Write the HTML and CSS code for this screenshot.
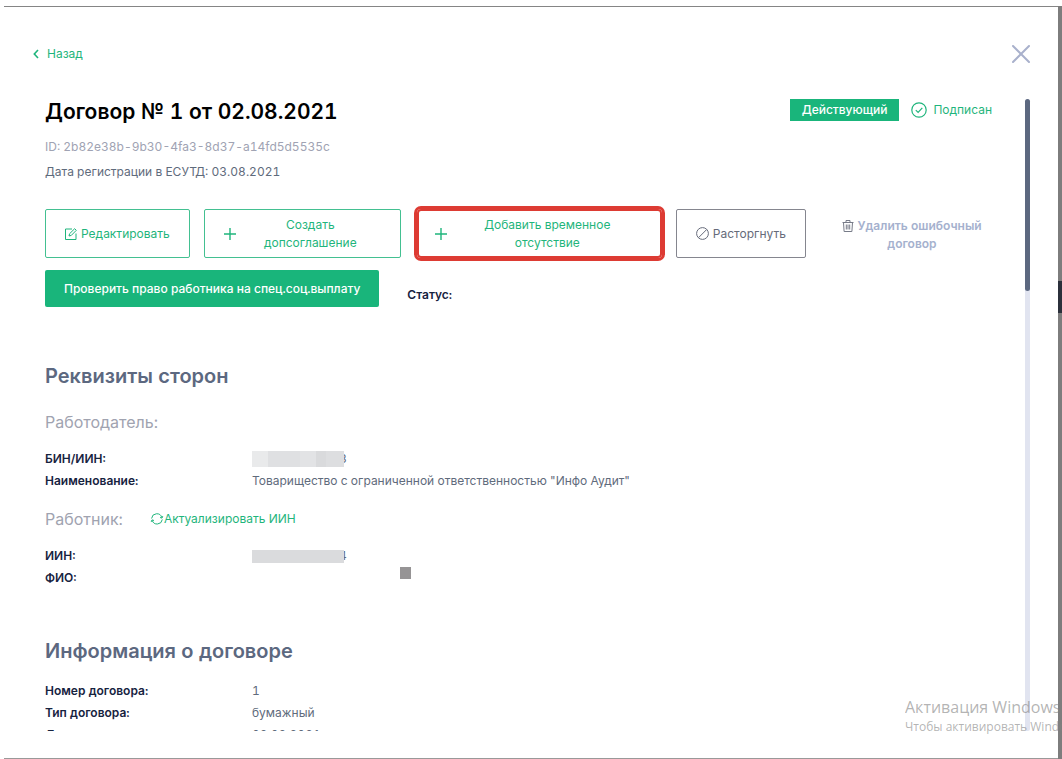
FILE: index.html
```html
<!DOCTYPE html>
<html lang="ru">
<head>
<meta charset="UTF-8">
<meta name="viewport" content="width=device-width, initial-scale=1">
<title>Договор № 1 от 02.08.2021</title>
<link rel="stylesheet" href="styles.css">
</head>
<body>
<div class="page">
  <main class="modal">
    <header class="modal-header">
      <a class="back" href="#">
        <svg width="6" height="10" viewBox="0 0 6 10"><path d="M5 1 1.300 5 5 9" fill="none" stroke="currentColor" stroke-width="1.600"/></svg>
        Назад
      </a>
      <button class="close" type="button" aria-label="Закрыть">
        <svg width="18" height="18" viewBox="0 0 18 18"><path d="M1 1l16 16M17 1L1 17" fill="none" stroke="currentColor" stroke-width="2" stroke-linecap="round"/></svg>
      </button>
    </header>

    <div class="scroll-area">
      <div class="content">
        <div class="title-row">
          <h1>Договор № 1 от 02.08.2021</h1>
          <div class="status">
            <span class="badge">Действующий</span>
            <span class="signed">
              <svg width="16" height="16" viewBox="0 0 16 16" fill="none" stroke="currentColor" stroke-width="1.200"><circle cx="8" cy="8" r="7.200"/><path d="M4.800 8.200l2.300 2.300 4.200-4.600"/></svg>
              Подписан
            </span>
          </div>
        </div>
        <p class="contract-id">ID: 2b82e38b-9b30-4fa3-8d37-a14fd5d5535c</p>
        <p class="reg-date">Дата регистрации в ЕСУТД: 03.08.2021</p>

        <!-- Actions -->
        <div class="actions">
          <button class="btn" type="button">
            <svg width="12" height="12" viewBox="0 0 12 12" fill="none" stroke="currentColor"><path d="M7 1H.5v10.500H11V5.500"/><path d="M4 8l.6-2.300L9.700.7l1.600 1.600-5 5.100z"/></svg>
            Редактировать
          </button>
          <button class="btn btn-create" type="button">
            <svg width="12" height="12" viewBox="0 0 12 12" fill="none" stroke="currentColor" stroke-width="1.400"><path d="M6 0v12M0 6h12"/></svg>
            <span>Создать<br>допсоглашение</span>
          </button>
          <button class="btn btn-absence" type="button">
            <svg width="12" height="12" viewBox="0 0 12 12" fill="none" stroke="currentColor" stroke-width="1.400"><path d="M6 0v12M0 6h12"/></svg>
            <span>Добавить временное<br>отсутствие</span>
          </button>
          <button class="btn btn-gray" type="button">
            <svg width="13" height="13" viewBox="0 0 13 13" fill="none" stroke="currentColor"><circle cx="6.500" cy="6.500" r="5.900"/><path d="M2.600 10.600l8-8"/></svg>
            Расторгнуть
          </button>
          <button class="btn-delete" type="button">
            <svg width="12" height="12" viewBox="0 0 12 12" fill="none" stroke="currentColor"><path d="M.5 2.500h11M4 2.500v-2h4v2M1.500 2.500l.6 9h7.800l.6-9M4.300 4.500v5M6 4.500v5M7.700 4.500v5"/></svg>
            Удалить ошибочный договор
          </button>
        </div>
        <div class="check-row">
          <button class="btn-check" type="button">Проверить право работника на спец.соц.выплату</button>
          <b class="check-status">Статус:</b>
        </div>

        <!-- Parties -->
        <section class="parties">
          <h2>Реквизиты сторон</h2>
          <div class="party">
            <h3>Работодатель:</h3>
          </div>
          <dl>
            <dt>БИН/ИИН:</dt>
            <dd class="masked"><i class="mask mask-bin"></i><span class="tail">8</span></dd>
            <dt>Наименование:</dt>
            <dd>Товарищество с ограниченной ответственностью "Инфо Аудит"</dd>
          </dl>
          <div class="party">
            <h3>Работник:</h3>
            <a class="refresh" href="#">
              <svg width="14" height="12" viewBox="0 0 14 12" fill="none" stroke="currentColor"><path d="M1.600 5.500A5.200 5.200 0 0 1 11.800 4.600M12.300 6.500A5.200 5.200 0 0 1 2.200 7.400"/><path d="M10 4.500l2 .6.8-2M4 7.500l-2-.6-.8 2"/></svg>
              Актуализировать ИИН
            </a>
          </div>
          <dl>
            <dt>ИИН:</dt>
            <dd class="masked"><i class="mask mask-iin"></i><span class="tail">4</span></dd>
            <dt>ФИО:</dt>
            <dd class="masked"><i class="mask-name"></i></dd>
          </dl>
        </section>

        <!-- Contract info -->
        <section class="info">
          <h2>Информация о договоре</h2>
          <dl>
            <dt>Номер договора:</dt>
            <dd>1</dd>
            <dt>Тип договора:</dt>
            <dd>бумажный</dd>
            <dt>Дата договора:</dt>
            <dd>02.08.2021</dd>
          </dl>
        </section>
      </div>
      <div class="scrollbar"><div class="thumb"></div></div>
    </div>
  </main>
  <div class="backdrop"><div class="backdrop-dark"></div></div>
  <div class="watermark">
    <div class="watermark-title">Активация Windows</div>
    <div>Чтобы активировать Windows</div>
  </div>
</div>
</body>
</html>
```
FILE: styles.css
```css
* {
  box-sizing: border-box;
}

body {
  margin: 0;
  background: #fff;
  color: #5f6b7c;
  font-family: Inter, "Liberation Sans", sans-serif;
  font-size: 12px;
  font-variant-numeric: tabular-nums;
  line-height: 18px;
}

h1, h2, h3, p, dl, dd {
  margin: 0;
}

button {
  padding: 0;
  border: 0;
  background: none;
  font: inherit;
  cursor: pointer;
}

a {
  color: #1fb57c;
  text-decoration: none;
}

svg {
  flex: none;
}

.page {
  position: relative;
  display: flex;
  height: 100vh;
  padding: 6px 0 0 4px;
  overflow: hidden;
}

.modal {
  flex: 1;
  min-width: 0;
  display: flex;
  flex-direction: column;
  padding: 0 28px 27px 29px;
  border-top: 1px solid #858585;
  border-bottom: 1px solid #999;
}

.modal-header {
  display: flex;
  justify-content: space-between;
  align-items: center;
  height: 92px;
  padding-top: 2px;
}

.back {
  display: flex;
  align-items: center;
  gap: 8px;
}

.close {
  display: flex;
  color: #a9b1cc;
}

.scroll-area {
  flex: 1;
  min-height: 0;
  display: flex;
  gap: 21px;
  padding-left: 12px;
}

.content {
  flex: 1;
  min-width: 0;
  overflow: hidden;
}

.scrollbar {
  width: 5px;
  border-radius: 3px;
  background: #e1e4f0;
}

.thumb {
  height: 192px;
  border-radius: 3px;
  background: #5c6880;
}

/* Title */
.title-row {
  display: flex;
  justify-content: space-between;
  align-items: flex-start;
  padding-right: 12px;
}

h1 {
  color: #000;
  font-size: 21px;
  font-weight: 600;
  line-height: 26px;
}

.status {
  display: flex;
  align-items: center;
  gap: 12px;
}

.badge {
  padding: 2px 12px;
  background: #19b57b;
  color: #fff;
  font-weight: 500;
}

.signed {
  display: flex;
  align-items: center;
  gap: 6px;
  color: #1fb57c;
}

.contract-id {
  margin-top: 13px;
  color: #a0a3b3;
}

.reg-date {
  margin-top: 7px;
}

/* Buttons */
.actions {
  display: flex;
  gap: 14px;
  margin-top: 28px;
}

.btn {
  display: flex;
  justify-content: center;
  align-items: center;
  gap: 4px;
  height: 49px;
  padding: 0 19px;
  border: 1px solid #43c091;
  border-radius: 2px;
  color: #1fb57c;
}

.btn span {
  flex: 1;
}

.btn-create {
  width: 197px;
}

.btn-absence {
  width: 245px;
  margin-left: 2px;
  padding: 0 16px;
  border: 2px solid #dd3b33;
  border-radius: 4px;
  box-shadow: 0 0 0 3px #dd3b33;
}

.btn-gray {
  border-color: #85868f;
  color: #666b7a;
}

.btn-delete {
  flex: 1;
  align-self: flex-start;
  padding: 8px 16px 0;
  color: #a5b1ce;
  font-weight: 600;
}

.btn-delete svg {
  vertical-align: -2px;
  color: #777b88;
}

.check-row {
  display: flex;
  align-items: center;
  gap: 28px;
  margin-top: 12px;
}

.btn-check {
  height: 37px;
  padding: 0 19px;
  border-radius: 2px;
  background: #19b57b;
  color: #fff;
  font-weight: 500;
}

.check-status {
  padding-top: 12px;
  color: #17233f;
  font-weight: 600;
}

/* Sections */
h2 {
  color: #5c6880;
  font-size: 20px;
  font-weight: 600;
  line-height: 26px;
}

h3 {
  color: #a0a3b0;
  font-size: 16px;
  font-weight: 400;
  line-height: 22px;
}

.parties {
  margin-top: 56px;
}

.party {
  display: flex;
  align-items: center;
  gap: 27px;
  margin-top: 16px;
}

h2 + .party {
  margin-top: 22px;
}

.refresh {
  display: flex;
  align-items: center;
}

dl {
  display: grid;
  grid-template-columns: 207px 1fr;
  grid-auto-rows: 22px;
  line-height: 22px;
  margin-top: 15px;
}

dt {
  color: #17233f;
  font-weight: 600;
}

.masked {
  display: flex;
  align-items: center;
}

.mask {
  position: relative;
  width: 92px;
  height: 16px;
  background: linear-gradient(90deg, #e9eaeb 17%, #dfe0e2 17%, #dfe0e2 52%, #e2e3e5 52%, #e2e3e5 70%, #d9dadc 70%, #d9dadc 80%, #dddee0 80%);
}

.mask-iin {
  height: 13px;
  background: #dadbdd;
}

/* last digit, half hidden by the mask */
.tail {
  margin-left: -5px;
}

.mask-name {
  align-self: flex-start;
  width: 11px;
  height: 12px;
  margin-left: 148px;
  background: #969495;
}

.info {
  margin-top: 49px;
}

.info dl {
  margin-top: 16px;
}

/* Page behind the modal */
.backdrop {
  width: 4px;
  background: #7d7d7d;
}

.backdrop-dark {
  height: 32px;
  margin-top: 275px;
  background: #2b303b;
}

.watermark {
  position: absolute;
  right: 0;
  bottom: 23px;
  width: 157px;
  overflow: hidden;
  color: rgba(130, 130, 130, 0.6);
  font-family: "Open Sans", "Noto Sans", sans-serif;
  font-size: 12px;
  white-space: nowrap;
  pointer-events: none;
}

.watermark-title {
  font-size: 16px;
  line-height: 22px;
}
```
